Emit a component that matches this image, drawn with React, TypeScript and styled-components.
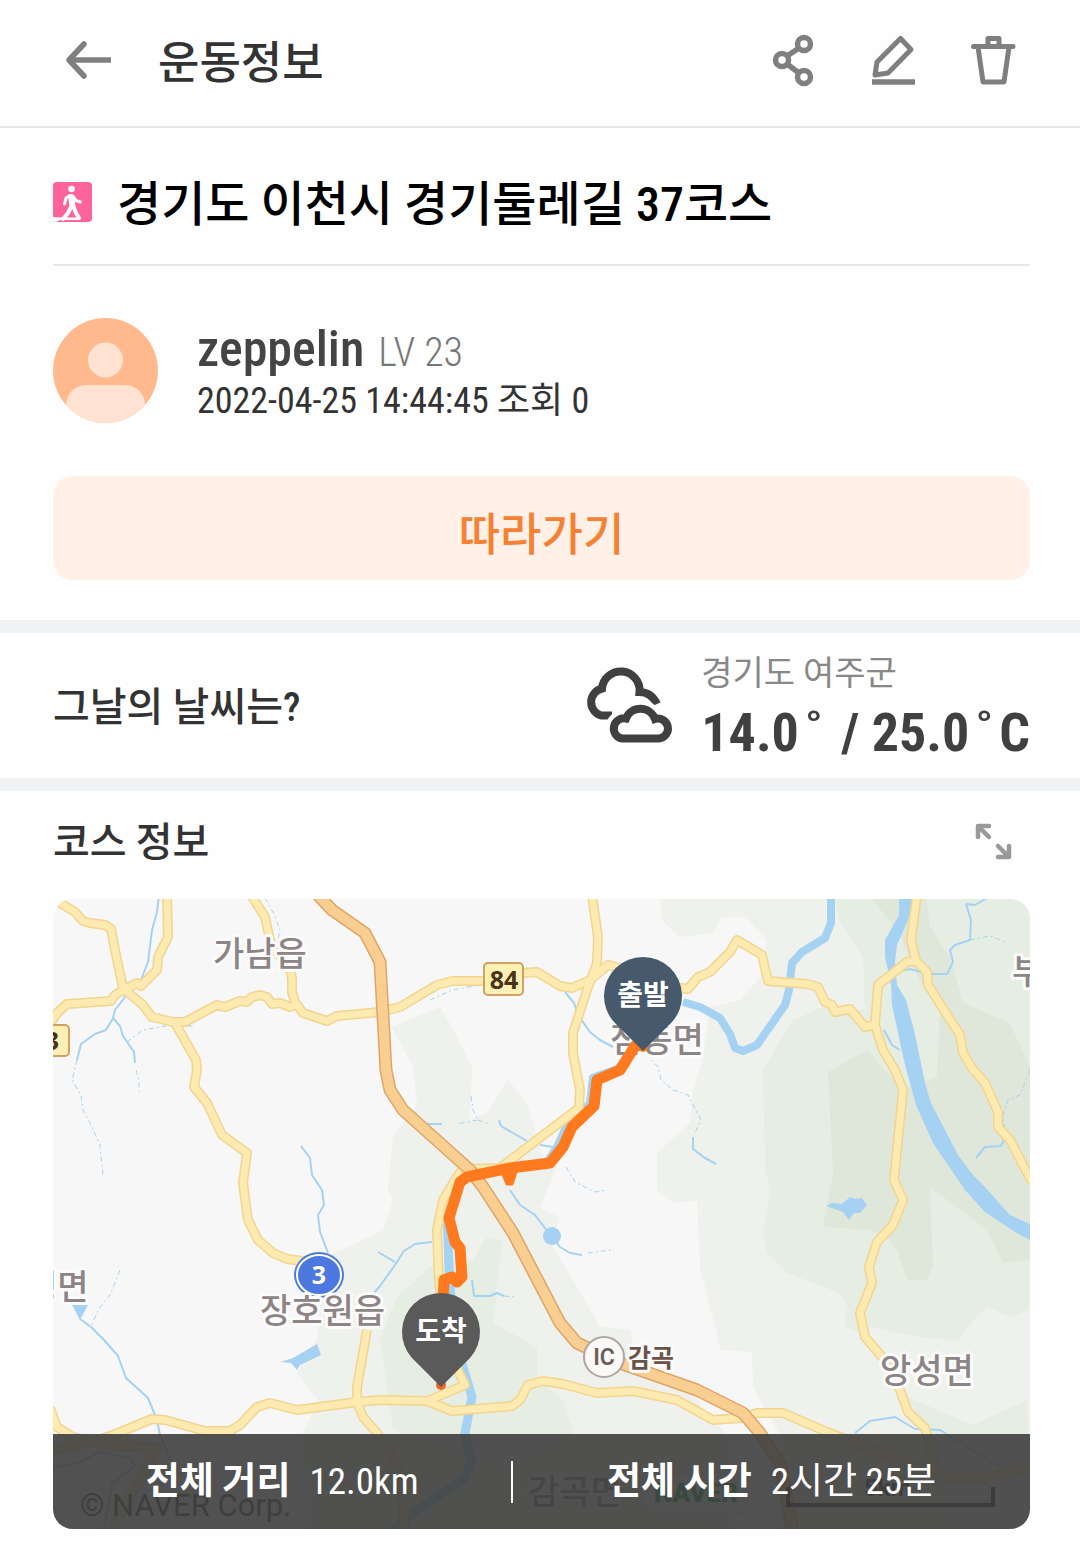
import React from "react";
import styled, { createGlobalStyle } from "styled-components";

const GlobalStyle = createGlobalStyle`
  *, *::before, *::after { box-sizing: border-box; }
  body {
    margin: 0;
    background: #fefefe;
    color: #333;
    font-family: "Roboto Condensed", Roboto, "Noto Sans CJK KR", sans-serif;
  }
  h1, h2, p, dl, dt, dd { margin: 0; font-weight: inherit; }
`;

const Korean = `"Noto Sans CJK KR", sans-serif`;
const Mixed = `"Roboto Condensed", "Noto Sans CJK KR", sans-serif`;

const Header = styled.header`
  display: flex;
  align-items: center;
  height: 128px;
  padding: 0 50px 6px 53px;
  border-bottom: 2px solid #e8e8e8;
`;

const HeaderTitle = styled.h1`
  flex: 1;
  padding-left: 33px;
  font: 500 45px/64px ${Korean};
`;

const Actions = styled.div`
  display: flex;
  gap: 28px;
`;

const IconButton = styled.button`
  display: flex;
  padding: 0;
  border: 0;
  background: none;
  cursor: pointer;
`;

const Summary = styled.section`
  padding: 0 50px 40px 53px;
`;

const TitleRow = styled.div`
  display: flex;
  align-items: center;
  gap: 24px;
  height: 138px;
  padding-top: 12px;
  border-bottom: 2px solid #e8e8e8;
  margin-bottom: 52px;
`;

const CourseTitle = styled.h2`
  padding-top: 6px;
  color: #000;
  font: 500 48px/64px ${Mixed};
`;

const Profile = styled.div`
  display: flex;
  align-items: center;
  gap: 39px;
  margin-bottom: 53px;
`;

const Name = styled.p`
  padding-top: 4px;
  color: #444;
  font-size: 50px;
  font-weight: 500;
  line-height: 52px;
`;

const Level = styled.span`
  margin-left: 14px;
  color: #777;
  font-size: 40px;
  font-weight: 300;
`;

const Meta = styled.p`
  font-size: 36px;
  line-height: 44px;
`;

const FollowButton = styled.button`
  display: block;
  width: 100%;
  height: 104px;
  padding: 8px 0 0;
  border: 0;
  border-radius: 20px;
  background: #fff0e8;
  color: #f58232;
  font: 500 45px/64px ${Korean};
  cursor: pointer;
`;

const Divider = styled.hr`
  height: 13px;
  margin: 0;
  border: 0;
  background: #f1f2f4;
`;

const Weather = styled.section`
  display: flex;
  align-items: center;
  height: 145px;
  padding: 0 50px 0 53px;
`;

const SectionTitle = styled.h2`
  flex: 1;
  padding-top: 4px;
  font: 500 40px/56px ${Mixed};
`;

const Forecast = styled.div`
  display: flex;
  align-items: center;
  gap: 28px;
`;

const Reading = styled.div`
  display: grid;
  gap: 10px;
  padding-top: 4px;
`;

const Place = styled.p`
  color: #888;
  font: 400 34px/40px ${Mixed};
`;

const Temperature = styled.p`
  color: #404040;
  font: 700 54px/60px ${Mixed};
`;

const Degree = styled.span`
  padding: 0 6px;
`;

const Course = styled.section`
  padding: 0 50px 24px 53px;
`;

const CourseHead = styled.div`
  display: flex;
  align-items: center;
  height: 108px;
  padding: 0 13px 8px 0;
`;

const MapCard = styled.div`
  position: relative;
  overflow: hidden;
  height: 630px;
  border-radius: 20px;
  background: #f7f7f7;
  > svg { display: block; width: 100%; height: 100%; }
`;

const Totals = styled.dl`
  position: absolute;
  inset: auto 0 0 0;
  display: flex;
  align-items: center;
  height: 95px;
  background: rgba(62, 62, 62, 0.9);
  color: #fff;
  font: 400 37px/42px ${Mixed};
`;

const Total = styled.div<{ $share: number }>`
  flex: ${(p) => p.$share} 1 0;
  display: flex;
  align-items: baseline;
  justify-content: center;
  gap: 19px;
  height: 42px;
  &:last-child { border-left: 2px solid #fff; }
  dt { font-weight: 700; }
`;

const MapLabel = styled.text`
  fill: #8d8585;
  stroke: #fbfbfb;
  stroke-width: 6px;
  stroke-linejoin: round;
  paint-order: stroke;
  font: 500 34px ${Korean};
`;

const PinLabel = styled.text`
  fill: #fff;
  font: 700 28px ${Korean};
  text-anchor: middle;
`;

const ShieldText = styled.text<{ $light?: boolean }>`
  fill: ${(p) => (p.$light ? "#fff" : "#4a3218")};
  font: 700 25px "Noto Sans", sans-serif;
  text-anchor: middle;
`;

const ROADS = [
  "53,899 60,903 75,912 83,921 90,923 105,925 111,929 115,950 123,988",
  "167,895 168,937 158,957 157,970 141,986 137,983 125,989 115,995 111,1001 67,1004 58,1012 50,1024",
  "123,988 143,1005 152,1017 173,1022 185,1022 217,1005 225,1007 240,1001 247,1002 252,997 260,995 267,997 272,1004 280,1003 290,1007 297,1004",
  "251,895 265,917 270,940 274,950 288,963 292,978 292,992 295,1002 303,1013 327,1021 337,1016 380,1012 400,1007 437,985 452,981 483,981 523,973 537,972 560,986 572,988 590,980 608,965 627,970 660,985 688,989 698,977 710,972 730,952 737,940 762,955 768,981 807,984 818,987 825,1002 832,1005 835,1012 850,1009 865,1027 875,1025",
  "592,895 598,937 597,963 587,990 573,1033 573,1053 580,1090 579,1108 500,1168 463,1169 457,1177 443,1200 437,1230 439,1283 448,1350 465,1385 427,1401",
  "175,1023 196,1060 197,1070 194,1087 207,1103 222,1135 247,1153 243,1183 248,1220 258,1240 273,1253 287,1259 310,1262",
  "367,1330 357,1387 357,1402 363,1417 377,1433 393,1457 402,1483 405,1532",
  "50,1408 57,1427 73,1437 107,1445 157,1448 112,1529",
  "53,1450 95,1441 113,1435 152,1419 165,1420 205,1431 230,1431 240,1425 257,1407 270,1403 297,1410 357,1402 380,1400 427,1401 452,1411 512,1406 520,1400 528,1385 543,1381 563,1384 597,1393 633,1391 677,1400 713,1420 740,1418 757,1413 783,1413 827,1432 907,1463 947,1477 987,1478 1032,1467",
  "917,895 911,940 916,961 907,962 878,985 875,1025 883,1050 895,1070 903,1090 894,1180 903,1200 893,1225 877,1242 869,1267 872,1283 860,1313 865,1337 883,1358 900,1390 908,1412 925,1428 927,1435 938,1475",
  "916,961 927,972 928,985 960,1035 963,1053 972,1068 985,1083 998,1112 998,1127 1010,1140 1032,1182",
];

const HIGHWAY =
  "318,895 332,910 365,933 380,962 386,1070 390,1090 403,1110 470,1170 483,1187 513,1233 560,1323 577,1343 620,1363 697,1390 743,1413 760,1433 780,1463 793,1532";

const ROUTE =
  "643,1045 635,1046 620,1070 597,1080 594,1106 572,1127 563,1147 550,1163 510,1168 467,1177 460,1182 449,1218 455,1242 460,1248 462,1277 457,1282 452,1277 444,1280 443,1300";

const STREAMS = [
  "159,895 157,912 152,930 148,962 141,980 125,997 115,1010 113,1018 120,1026 123,1036 134,1052 135,1063",
  "113,1018 106,1030 95,1034 81,1044 77,1060",
  "301,1146 310,1158 312,1175 322,1190 324,1205 318,1215 320,1232 328,1253",
  "80,1319 91,1327 104,1340 118,1356 126,1378 148,1398 157,1420 160,1435 168,1455 180,1475",
  "565,992 574,1003 578,1015 590,1032 600,1040 613,1047",
  "415,1113 424,1124 442,1124",
  "499,1120 501,1126 513,1133 527,1141",
  "540,1145 554,1147",
  "510,1190 520,1205 535,1215 545,1228 560,1247 570,1253 582,1255",
  "432,1242 415,1244 404,1251 395,1265 380,1286 374,1293",
  "378,1252 395,1262",
  "472,1280 474,1296 490,1296 497,1293 504,1296",
  "987,898 975,905 966,904 971,920 970,940 955,945 950,950 953,962 947,974 928,974 910,969 900,971",
  "1004,1125 1004,1140 1001,1146 985,1147 976,1158",
  "884,1030 892,1045 900,1050",
  "855,1433 870,1421 895,1417 915,1429 940,1430 1000,1467",
  "53,1468 80,1462 100,1452 130,1458 135,1466 112,1483 104,1529",
  "693,1137 693,1149 705,1158 716,1164",
];

const DOTTED = [
  "77,1060 72,1080 81,1095 83,1110 91,1125 100,1145 103,1175",
  "265,898 273,912 280,930 276,948",
  "127,1042 143,1030 165,1026 195,1026",
  "136,1070 139,1080 139,1092",
  "471,1096 473,1110 478,1120 457,1124",
  "478,1120 490,1124",
  "430,1000 452,990 480,985",
  "646,1054 658,1067 661,1080 673,1090",
  "673,1090 688,1095 701,1120 694,1135",
  "566,1167 575,1182 595,1192 607,1190",
  "588,1253 602,1251 614,1250",
  "120,1270 110,1295 98,1310 91,1327",
  "504,1296 514,1297",
  "970,940 990,936 1005,942",
  "1030,1070 1020,1095 1008,1100 1003,1115 1004,1125",
];

const points = (list: string[], extra: React.SVGProps<SVGPolylineElement>) =>
  list.map((p) => <polyline key={p} points={p} {...extra} />);

function CourseMap() {
  return (
    <svg viewBox="53 899 977 630" preserveAspectRatio="xMidYMid slice" role="img" aria-label="코스 지도">
      <g fill="#eef1ec">
        <path d="M392 1027L440 1007 452 1027 472 1067 470 1120 487 1113 508 1080 527 1103 543 1157 557 1167 540 1207 560 1218 550 1243 573 1280 600 1327 630 1330 635 1355 690 1390 730 1440V1529H310L303 1433 318 1400 297 1373 317 1340 325 1258 383 1230 393 1200 388 1190 393 1137 417 1105 413 1067Z" />
        <path d="M660 899L662 920 680 937 713 933 722 917H745L767 940 760 977 740 1000 710 1007 703 1057 693 1090 690 1123 657 1153V1190L673 1203 697 1200 700 1267 717 1333 720 1350 752 1352 753 1387 780 1435V1529H1030V899Z" />
      </g>
      <g fill="#e6eee3">
        <path d="M835 899L840 923 863 957 865 1010 823 1007 793 1020 763 1070 765 1167 770 1190 763 1233 767 1253 787 1273 837 1292 847 1303 845 1327 867 1337 870 1327 920 1337 957 1340 970 1325 987 1307 1010 1317 1030 1310V899Z" />
        <path d="M907 1397L973 1425 1027 1400 1030 1529H960L925 1430Z" />
        <path d="M473 1260L487 1237 502 1240 493 1323 537 1347V1380L563 1400 573 1433 500 1465 393 1430 380 1340 397 1297 430 1267Z" />
      </g>
      <path
        fill="#dfe7da"
        d="M828 1072L868 1050 887 1073 907 1088 937 1077 940 1013 917 975 897 930 872 899H927L930 927 950 957 963 1003 1010 1023 1030 1067V1260L1003 1263 987 1230 930 1187 933 1267 927 1280H907L897 1250 887 1237 870 1230 823 1227 833 1173Z"
      />
      <g fill="none" stroke="#a5d2f2" strokeLinejoin="round">
        <polyline strokeWidth="8" points="831,895 831,923 825,938 802,952 792,963 789,990 785,1005 757,1045 743,1051 735,1048 730,1034 720,1018 700,1007 683,1002" />
        <polyline strokeWidth="9" points="447,1210 449,1267 452,1320 463,1367 472,1397 465,1433 472,1463 463,1480 413,1513 390,1532" />
        <polyline strokeWidth="6" points="634,1052 617,1068 592,1077 589,1103 566,1125 556,1147 546,1162" />
        {points(STREAMS, { strokeWidth: 2 })}
        {points(DOTTED, { strokeWidth: 1, strokeDasharray: "5 3 2 3" })}
      </g>
      <g fill="#a5d2f2">
        <path d="M899 899V915L885 940V957L891 985 892 1005 905 1065 916 1105 933 1143 965 1190 985 1212 1015 1232 1030 1240V1224L1010 1215 985 1187 973 1175 958 1155 944 1128 931 1103 925 1083 914 1030 906 1000 897 985 895 962 897 945 908 920 914 899Z" />
        <path d="M826 1206L832 1203 842 1204 850 1197 855 1199 862 1198 867 1205 860 1213 854 1213 849 1220 843 1212Z" />
        <path d="M280 1362L293 1358 317 1344 321 1355 300 1365 297 1370 291 1363Z" />
        <path d="M72 1305H88L80 1320Z" />
        <circle cx="552" cy="1236" r="9" />
      </g>
      <g fill="none" strokeLinejoin="round">
        {points(ROADS, { stroke: "#f2d48e", strokeWidth: 10 })}
        {points(ROADS, { stroke: "#fdeab0", strokeWidth: 7 })}
        <polyline points={HIGHWAY} stroke="#dfa568" strokeWidth="13" />
        <polyline points={HIGHWAY} stroke="#f9ce91" strokeWidth="10" />
      </g>

      <MapLabel x="213" y="966">가남읍</MapLabel>
      <MapLabel x="610" y="1052">점동면</MapLabel>
      <MapLabel x="880" y="1383">앙성면</MapLabel>
      <MapLabel x="26" y="1299">청면</MapLabel>
      <MapLabel x="1012" y="984">부</MapLabel>
      <MapLabel x="528" y="1504">감곡면</MapLabel>

      <polyline points={ROUTE} fill="none" stroke="#ff7a1e" strokeWidth="11" strokeLinejoin="round" />
      <path d="M502 1172L507 1184H512L516 1172Z" fill="#ff7a1e" stroke="#ff7a1e" strokeWidth="3" strokeLinejoin="round" />
      <circle cx="643" cy="1047" r="5" fill="#ff7a1e" />
      <circle cx="441" cy="1385" r="5" fill="#e8672a" />

      <rect x="484" y="963" width="39" height="32" rx="4" fill="#fdf0b4" stroke="#cfa263" strokeWidth="2" />
      <ShieldText x="504" y="989">84</ShieldText>
      <rect x="30" y="1025" width="39" height="31" rx="4" fill="#fdf0b4" stroke="#cfa263" strokeWidth="2" />
      <ShieldText x="52" y="1050">3</ShieldText>

      <ellipse cx="319" cy="1275" rx="25" ry="23" fill="#4c78e0" />
      <ellipse cx="319" cy="1275" rx="22" ry="20" fill="#4c78e0" stroke="#fff" strokeWidth="2" />
      <ShieldText x="319" y="1284" $light>3</ShieldText>
      <MapLabel x="260" y="1323">장호원읍</MapLabel>

      <circle cx="604" cy="1357" r="20" fill="#fbf9f7" stroke="#b0a5a0" strokeWidth="2" />
      <text x="604" y="1365" textAnchor="middle" fill="#6b5f5a" fontFamily="Roboto" fontWeight="600" fontSize="23">IC</text>
      <text x="628" y="1367" fill="#6b5348" stroke="#fbfbfb" strokeWidth="6" strokeLinejoin="round" paintOrder="stroke" fontFamily="Noto Sans CJK KR" fontWeight="700" fontSize="25">감곡</text>

      <text x="80" y="1516" fill="#444" fontFamily="Roboto" fontSize="31">© NAVER Corp.</text>
      <rect x="641" y="1473" width="122" height="40" rx="20" fill="#f7f7f7" stroke="#ddd" />
      <text x="654" y="1502" fill="#03a43c" fontFamily="Roboto" fontWeight="900" fontSize="26">NAVER</text>
      <text x="864" y="1496" fill="#333" fontFamily="Roboto" fontWeight="700" fontSize="24">5km</text>
      <path d="M788 1487V1505H993V1487" fill="none" stroke="#222" strokeWidth="4" />

      <path d="M643 1051L614 1022A39 39 0 1 1 672 1022Z" fill="#46596d" />
      <PinLabel x="643" y="1005">출발</PinLabel>
      <path d="M441 1387L412 1358A39 39 0 1 1 470 1358Z" fill="#5a5a5a" />
      <PinLabel x="441" y="1341">도착</PinLabel>
    </svg>
  );
}

const BackIcon = () => (
  <svg width="72" height="72" viewBox="53 24 72 72" fill="none" stroke="#7f7f7f" strokeWidth="5.5" strokeLinecap="round" strokeLinejoin="round">
    <path d="M84 44L69 60 84 76" />
    <path d="M69 60H111" strokeLinecap="butt" />
  </svg>
);

const ShareIcon = () => (
  <svg width="72" height="72" viewBox="758 24 72 72" fill="none" stroke="#7f7f7f" strokeWidth="5.5">
    <circle cx="804" cy="44" r="6.5" />
    <circle cx="782" cy="60" r="6.5" />
    <circle cx="804" cy="77" r="6.5" />
    <path d="M787 56L799 48M787 64L799 73" />
  </svg>
);

const EditIcon = () => (
  <svg width="72" height="72" viewBox="858 24 72 72" fill="none" stroke="#7f7f7f" strokeWidth="5" strokeLinejoin="round">
    <path d="M900.5 38.5L911 49.5 888 73 875 75 877 62Z" />
    <path d="M872 82H915" strokeWidth="5.5" />
  </svg>
);

const TrashIcon = () => (
  <svg width="72" height="72" viewBox="958 24 72 72" fill="none" stroke="#7f7f7f" strokeWidth="5" strokeLinejoin="round" strokeLinecap="round">
    <path d="M973.5 46.5H1013M988 46V38.5H999V46M978 47L983 82H1004L1009 47" />
  </svg>
);

const WalkIcon = () => (
  <svg width="40" height="40" viewBox="53 182 40 40">
    <rect x="53" y="182" width="39" height="40" rx="4" fill="#ff639b" />
    <g fill="none" stroke="#fff" strokeLinecap="round" strokeLinejoin="round">
      <circle cx="71.5" cy="189" r="3.3" fill="#fff" stroke="none" />
      <path d="M71 197L72.5 206" strokeWidth="6" />
      <path d="M70 195.5L66 198 64.5 204M73 196L76 200.5 80.5 202" strokeWidth="3" />
      <path d="M70.5 208L68 213 63 219M73.5 207L76 213 79 218" strokeWidth="4" />
    </g>
    <path d="M53 217L60 217.5 77 217.5 79 220H60L56 222 53 221Z" fill="#fff" />
  </svg>
);

const Avatar = () => (
  <svg width="105" height="105" viewBox="0 0 105 105" role="img" aria-label="프로필">
    <clipPath id="avatar-clip">
      <circle cx="52.5" cy="52.5" r="52.5" />
    </clipPath>
    <g clipPath="url(#avatar-clip)">
      <rect width="105" height="105" fill="#ffb98d" />
      <circle cx="52.5" cy="42" r="17.5" fill="#ffe2d1" />
      <rect x="13" y="67" width="79" height="60" rx="20" fill="#ffe2d1" />
    </g>
  </svg>
);

const NEAR_CLOUD =
  "M623 738.5H660A10 10 0 1 0 656 719 15.5 15.5 0 0 0 627 718.5 10 10 0 0 0 623 738.5Z";

const CloudIcon = () => (
  <svg width="92" height="78" viewBox="582 667 92 78" fill="none" strokeWidth="8" stroke="#404040">
    <path d="M613 715.5H602A14 14 0 0 1 603 688.5 18.5 18.5 0 0 1 640.5 692C649 692 654 696 658 704" />
    <path d={NEAR_CLOUD} stroke="#fefefe" strokeWidth="17" fill="#fefefe" />
    <path d={NEAR_CLOUD} />
  </svg>
);

const ExpandIcon = () => (
  <svg width="48" height="48" viewBox="969 817 48 48" fill="none" stroke="#999" strokeWidth="4.5" strokeLinecap="round" strokeLinejoin="round">
    <path d="M978 837V826H989M979 827L989 837M1009 846V857H998M1008 856L998 846" />
  </svg>
);

export default function App() {
  return (
    <>
      <GlobalStyle />
      <Header>
        <IconButton aria-label="뒤로"><BackIcon /></IconButton>
        <HeaderTitle>운동정보</HeaderTitle>
        <Actions>
          <IconButton aria-label="공유"><ShareIcon /></IconButton>
          <IconButton aria-label="수정"><EditIcon /></IconButton>
          <IconButton aria-label="삭제"><TrashIcon /></IconButton>
        </Actions>
      </Header>
      <main>
        <Summary>
          <TitleRow>
            <WalkIcon />
            <CourseTitle>경기도 이천시 경기둘레길 37코스</CourseTitle>
          </TitleRow>
          <Profile>
            <Avatar />
            <div>
              <Name>zeppelin<Level>LV 23</Level></Name>
              <Meta>2022-04-25 14:44:45 조회 0</Meta>
            </div>
          </Profile>
          <FollowButton>따라가기</FollowButton>
        </Summary>
        <Divider />
        <Weather>
          <SectionTitle>그날의 날씨는?</SectionTitle>
          <Forecast>
            <CloudIcon />
            <Reading>
              <Place>경기도 여주군</Place>
              <Temperature>
                14.0<Degree>˚</Degree> / 25.0<Degree>˚</Degree>C
              </Temperature>
            </Reading>
          </Forecast>
        </Weather>
        <Divider />
        <Course>
          <CourseHead>
            <SectionTitle>코스 정보</SectionTitle>
            <IconButton aria-label="지도 확대"><ExpandIcon /></IconButton>
          </CourseHead>
          <MapCard>
            <CourseMap />
            <Totals>
              <Total $share={47}>
                <dt>전체 거리</dt>
                <dd>12.0km</dd>
              </Total>
              <Total $share={53}>
                <dt>전체 시간</dt>
                <dd>2시간 25분</dd>
              </Total>
            </Totals>
          </MapCard>
        </Course>
      </main>
    </>
  );
}
